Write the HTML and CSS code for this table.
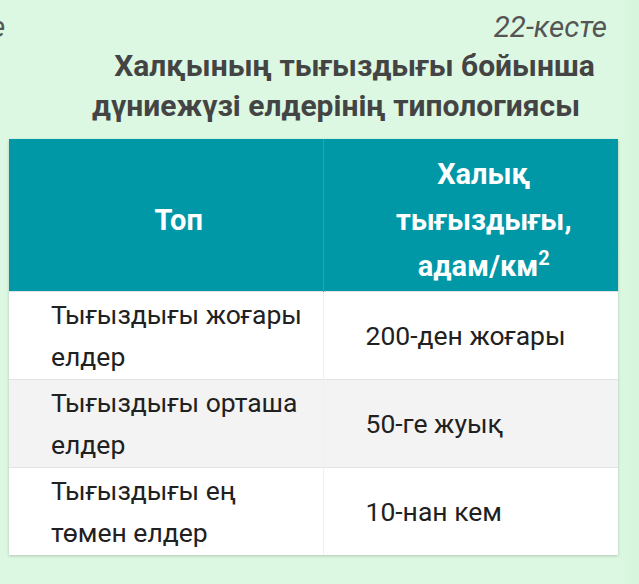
FILE: index.html
```html
<!DOCTYPE html>
<html lang="kk">
<head>
<meta charset="utf-8">
<title>22-кесте</title>
<link rel="stylesheet" href="styles.css">
</head>
<body>
<div class="page">
  <span class="cut">е</span>
  <div class="caption">22-кесте</div>
  <div class="title">Халқының тығыздығы бойынша дүниежүзі елдерінің типологиясы</div>
  <table class="grid">
    <colgroup>
      <col class="c1">
      <col class="c2">
    </colgroup>
    <thead>
      <tr>
        <th>Топ</th>
        <th>Халық тығыздығы, адам/км<sup>2</sup></th>
      </tr>
    </thead>
    <tbody>
      <tr>
        <td>Тығыздығы жоғары елдер</td>
        <td>200-ден жоғары</td>
      </tr>
      <tr class="alt">
        <td>Тығыздығы орташа елдер</td>
        <td>50-ге жуық</td>
      </tr>
      <tr>
        <td>Тығыздығы ең төмен елдер</td>
        <td>10-нан кем</td>
      </tr>
    </tbody>
  </table>
</div>
</body>
</html>
```
FILE: styles.css
```css
html, body {
  margin: 0;
  height: 100%;
}
body {
  background: linear-gradient(to right, #dcf8e2 0, #dcf8e2 96%, #d6f5dc 100%);
  font-family: Roboto, "Noto Sans", sans-serif;
  overflow: hidden;
}
.page {
  position: relative;
  padding: 10px 21px 0 9px;
}
.cut {
  position: absolute;
  left: -10px;
  top: 10px;
  font-style: italic;
  font-size: 29.5px;
  line-height: 34px;
  color: #555;
}
.caption {
  text-align: right;
  padding-right: 11px;
  font-style: italic;
  font-size: 29.5px;
  line-height: 34px;
  color: #555;
}
.title {
  margin: 2px 0 0 47px;
  width: 560px;
  text-align: center;
  text-indent: 37px;
  font-weight: bold;
  font-size: 30px;
  line-height: 40px;
  color: #444;
}
.grid {
  margin-top: 13px;
  width: 609px;
  table-layout: fixed;
  border-collapse: collapse;
  background: #fff;
  box-shadow: 0 1px 3px rgba(0, 0, 0, 0.2);
}
.c1 {
  width: 314px;
}
.c2 {
  width: 295px;
}
.grid th, .grid td {
  padding: 2px 16px 1px 42px;
}
.grid th {
  background: #0097a7;
  color: #fff;
  font-weight: bold;
  font-size: 29px;
  line-height: 46px;
  height: 142px;
  padding-top: 10px;
  padding-bottom: 0;
  text-align: center;
  border-left: 1px solid rgba(255, 255, 255, 0.15);
}
.grid th:first-child, .grid td:first-child {
  border-left: none;
}
.grid sup {
  font-size: 20px;
  line-height: 0;
}
.grid td {
  font-size: 26.5px;
  line-height: 42px;
  color: #212121;
  height: 84px;
  text-align: left;
  border-top: 1px solid #e3e3e3;
  border-left: 1px solid #f0f0f0;
}
.grid tr.alt td {
  background: #f3f3f3;
}
```
